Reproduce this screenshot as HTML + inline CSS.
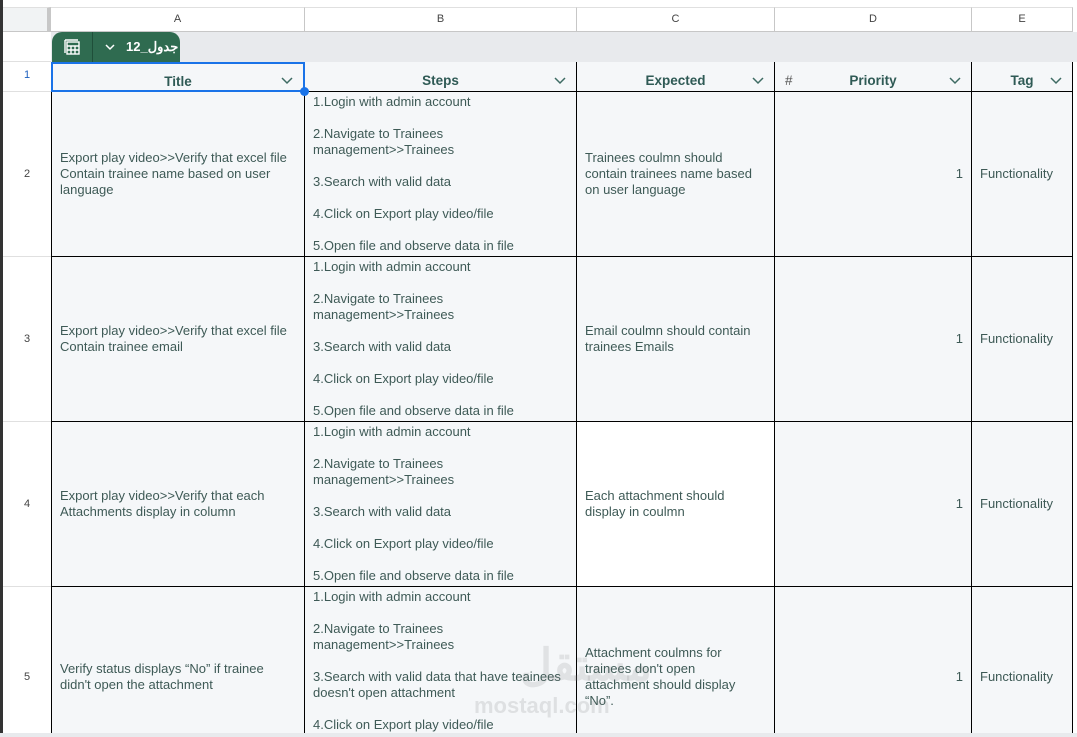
<!DOCTYPE html>
<html><head><meta charset="utf-8">
<style>
*{box-sizing:border-box;margin:0;padding:0}
html,body{width:1077px;height:737px;overflow:hidden}
body{background:#fff;font-family:"Liberation Sans",Arial,sans-serif}
#w{position:relative;width:1077px;height:737px;overflow:hidden}
.a{position:absolute}
.ch{position:absolute;top:7px;height:25px;border-right:1px solid #c7c7c7;border-bottom:1px solid #c7c7c7;border-top:1px solid #e0e0e0;font-size:11px;color:#444;text-align:center;line-height:23px;background:#fff}
.rh{position:absolute;left:3px;width:48px;font-size:11px;color:#444;text-align:center;border-bottom:1px solid #e0e0e0;background:#fff}
.c{position:absolute;background:#f5f7f9;border-right:1px solid #000;border-bottom:1px solid #000;font-size:13px;line-height:16px;color:#3e5a56;overflow:hidden;padding:0 8px}
.v{display:flex;align-items:center}
.h{position:absolute;top:62px;height:30px;background:#f5f7f9;border-right:1px solid #000;border-bottom:1px solid #000;font-size:13.5px;font-weight:bold;color:#2f5a55;text-align:center;line-height:38px}
.h svg{position:absolute;right:10px;top:15px}
</style></head><body><div id="w">
<div class="a" style="left:0;top:0;width:3px;height:737px;background:#333"></div>
<div class="a" style="left:3px;top:7px;width:48px;height:25px;background:#f1f3f4;border-right:4px solid #c7c7c7;border-bottom:1px solid #c7c7c7;border-top:1px solid #e0e0e0"></div>
<div class="ch" style="left:51px;width:254px">A</div>
<div class="ch" style="left:305px;width:272px">B</div>
<div class="ch" style="left:577px;width:198px">C</div>
<div class="ch" style="left:775px;width:197px">D</div>
<div class="ch" style="left:972px;width:101px">E</div>
<div class="a" style="left:51px;top:32px;width:1026px;height:30px;background:#e8eaed"></div>
<div class="rh" style="top:32px;height:30px"></div>
<div class="a" style="left:52px;top:32px;width:128px;height:30px;background:#2f6b50;border-radius:10px 10px 0 0;color:#fff;font-size:13px;font-weight:bold">
 <svg class="a" style="left:12px;top:7px" width="16" height="16" viewBox="0 0 16 16" fill="none" stroke="#fff" stroke-width="1.4"><rect x="3" y="3" width="12" height="12"/><path d="M1 1v13M1 1h13M3 7h12M3 11h12M7 7v8M11 7v8"/></svg>
 <div class="a" style="left:40px;top:0;width:1px;height:30px;background:#1f4f3a"></div>
 <svg class="a" style="left:53px;top:12px" width="10" height="7" viewBox="0 0 10 7"><path d="M1 1l4 4 4-4" stroke="#fff" stroke-width="1.5" fill="none"/></svg>
 <span class="a" style="left:74px;top:7px;font-family:'Liberation Sans','Noto Sans CJK SC',sans-serif">جدول_12</span>
</div>
<div class="rh" style="top:62px;height:30px;line-height:26px;color:#1a5ebd">1</div>
<div class="h" style="left:51px;width:254px;border:2px solid #1a73e8;line-height:36px">Title<svg style="top:13px" width="12" height="8" viewBox="0 0 12 8"><path d="M1 1l5 5 5-5" stroke="#3e6b63" stroke-width="1.5" fill="none"/></svg></div>
<div class="a" style="left:300px;top:87px;width:9px;height:9px;border-radius:50%;background:#1a73e8;z-index:3"></div>
<div class="h" style="left:305px;width:272px">Steps<svg width="12" height="8" viewBox="0 0 12 8"><path d="M1 1l5 5 5-5" stroke="#3e6b63" stroke-width="1.5" fill="none"/></svg></div>
<div class="h" style="left:577px;width:198px">Expected<svg width="12" height="8" viewBox="0 0 12 8"><path d="M1 1l5 5 5-5" stroke="#3e6b63" stroke-width="1.5" fill="none"/></svg></div>
<div class="h" style="left:775px;width:197px"><span style="position:absolute;left:10px;font-weight:normal;color:#555">#</span>Priority<svg width="12" height="8" viewBox="0 0 12 8"><path d="M1 1l5 5 5-5" stroke="#3e6b63" stroke-width="1.5" fill="none"/></svg></div>
<div class="h" style="left:972px;width:101px">Tag<svg width="12" height="8" viewBox="0 0 12 8"><path d="M1 1l5 5 5-5" stroke="#3e6b63" stroke-width="1.5" fill="none"/></svg></div>

<div class="rh v" style="top:92px;height:165px;justify-content:center">2</div>
<div class="c v" style="left:51px;top:92px;width:254px;height:165px;border-left:1px solid #000">Export play video&gt;&gt;Verify that excel file Contain trainee name based on user language</div>
<div class="c" style="left:305px;top:92px;width:272px;height:165px;padding-top:2px">1.Login with admin account<br><br>2.Navigate to Trainees management&gt;&gt;Trainees<br><br>3.Search with valid data<br><br>4.Click on Export play video/file<br><br>5.Open file and observe data in file</div>
<div class="c v" style="left:577px;top:92px;width:198px;height:165px">Trainees coulmn should contain trainees name based on user language</div>
<div class="c v" style="left:775px;top:92px;width:197px;height:165px;justify-content:flex-end">1</div>
<div class="c v" style="left:972px;top:92px;width:101px;height:165px">Functionality</div>

<div class="rh v" style="top:257px;height:165px;justify-content:center">3</div>
<div class="c v" style="left:51px;top:257px;width:254px;height:165px;border-left:1px solid #000">Export play video&gt;&gt;Verify that excel file Contain trainee email</div>
<div class="c" style="left:305px;top:257px;width:272px;height:165px;padding-top:2px">1.Login with admin account<br><br>2.Navigate to Trainees management&gt;&gt;Trainees<br><br>3.Search with valid data<br><br>4.Click on Export play video/file<br><br>5.Open file and observe data in file</div>
<div class="c v" style="left:577px;top:257px;width:198px;height:165px">Email coulmn should contain trainees Emails</div>
<div class="c v" style="left:775px;top:257px;width:197px;height:165px;justify-content:flex-end">1</div>
<div class="c v" style="left:972px;top:257px;width:101px;height:165px">Functionality</div>

<div class="rh v" style="top:422px;height:165px;justify-content:center">4</div>
<div class="c v" style="left:51px;top:422px;width:254px;height:165px;border-left:1px solid #000">Export play video&gt;&gt;Verify that each Attachments display in column</div>
<div class="c" style="left:305px;top:422px;width:272px;height:165px;padding-top:2px">1.Login with admin account<br><br>2.Navigate to Trainees management&gt;&gt;Trainees<br><br>3.Search with valid data<br><br>4.Click on Export play video/file<br><br>5.Open file and observe data in file</div>
<div class="c v" style="left:577px;top:422px;width:198px;height:165px;background:#fff">Each attachment should display in coulmn</div>
<div class="c v" style="left:775px;top:422px;width:197px;height:165px;justify-content:flex-end">1</div>
<div class="c v" style="left:972px;top:422px;width:101px;height:165px">Functionality</div>

<div class="rh v" style="top:587px;height:180px;justify-content:center;border-bottom:none">5</div>
<div class="c v" style="left:51px;top:587px;width:254px;height:180px;border-left:1px solid #000">Verify status displays “No” if trainee didn't open the attachment</div>
<div class="c" style="left:305px;top:587px;width:272px;height:180px;padding-top:2px">1.Login with admin account<br><br>2.Navigate to Trainees management&gt;&gt;Trainees<br><br>3.Search with valid data that have teainees doesn't open attachment<br><br>4.Click on Export play video/file</div>
<div class="c v" style="left:577px;top:587px;width:198px;height:180px"><div>Attachment coulmns for<br>trainees don't open<br>attachment should display<br>“No”.</div></div>
<div class="c v" style="left:775px;top:587px;width:197px;height:180px;justify-content:flex-end">1</div>
<div class="c v" style="left:972px;top:587px;width:101px;height:180px">Functionality</div>

<div class="a" style="left:520px;top:640px;font-size:44px;font-weight:bold;color:rgba(120,120,120,0.16);font-family:'Liberation Sans','Noto Sans CJK SC',sans-serif">مستقل</div>
<div class="a" style="left:474px;top:693px;font-size:22px;font-weight:bold;color:rgba(120,120,120,0.18)">mostaql.com</div>
<div class="a" style="left:0;top:733px;width:1077px;height:4px;background:#e8eaed;z-index:5"></div>
</div></body></html>
